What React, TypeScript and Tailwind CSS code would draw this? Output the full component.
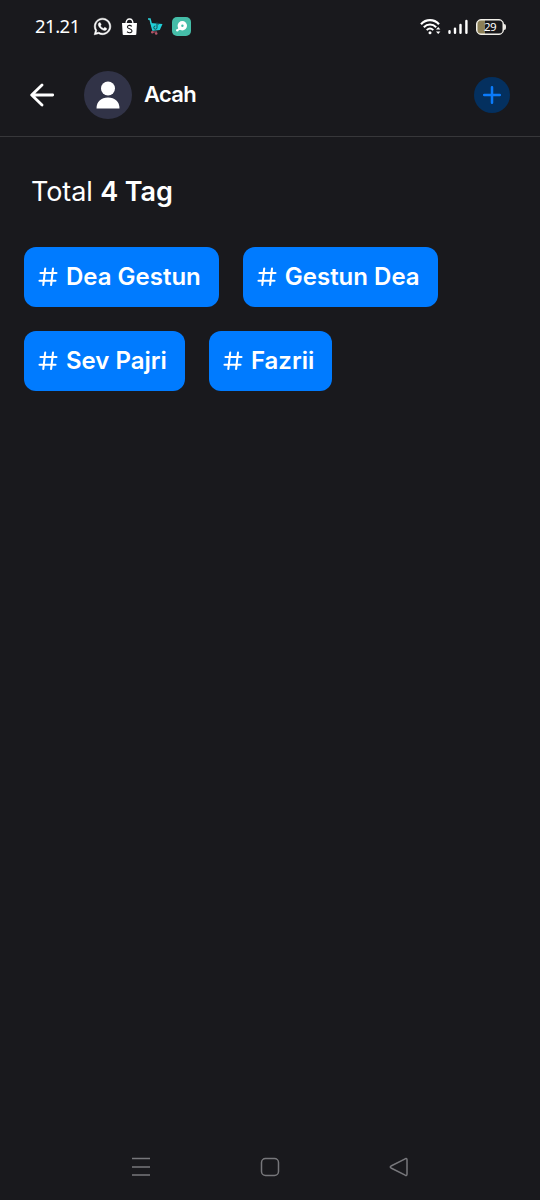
import { FaWhatsapp } from "react-icons/fa";

const tags = ["Dea Gestun", "Gestun Dea", "Sev Pajri", "Fazrii"];

const StatusBar = () => (
	<div className="flex h-[53px] items-center px-[34px] text-white">
		<p className="w-[59px] whitespace-nowrap pl-px font-['Noto_Sans',sans-serif] text-[18.5px] leading-none tracking-[-0.5px]">21.21</p>
		<FaWhatsapp className="mr-[9px] size-[19px] stroke-white stroke-[14px]" />
		<svg className="mr-[9px] h-[18px] w-[17px]" viewBox="0 0 17 18">
			<path d="M1 5h15l-.7 11.2Q15.200 17 14.400 17H2.600Q1.800 17 1.700 16.200Z" fill="#fff" />
			<path d="M5 6C5 2.500 6.500 1 8.500 1S12 2.500 12 6" fill="none" stroke="#fff" strokeWidth="1.300" />
			<path
				d="M10.800 8.300C9.500 7 6.500 7 6.400 9c0 2.100 4.700 1.600 4.600 4 0 2-3.100 2.200-5 .7"
				fill="none"
				stroke="#18181b"
				strokeWidth="1.100"
			/>
		</svg>
		<svg className="mr-[9px] h-[18px] w-[16px]" viewBox="0 0 16 18">
			<path d="M1 1h2l3 11.500" fill="none" stroke="#2cd3dc" strokeWidth="1.500" />
			<path d="M3.500 5 15.500 6 12.800 12l-6.800.8Z" fill="#20cfd8" />
			<path d="M10 4.500v5a1.600 1.600 0 1 1-1.600-1.500M10 4.500q.5 1.500 2 1.700" fill="none" stroke="#14464f" strokeWidth="1" />
			<path d="M4.500 14h5.500" stroke="#b4566a" strokeWidth="1" />
			<circle cx="5.300" cy="14.300" r="1.200" fill="#b4566a" />
			<circle cx="9.200" cy="15.500" r="1.300" fill="#b4566a" />
		</svg>
		<svg className="size-[19px]" viewBox="0 0 19 19">
			<rect width="19" height="19" rx="5" fill="#45bda8" />
			<circle cx="10.300" cy="8.800" r="4.700" fill="#fff" />
			<path d="m7 10-2.300 3.600L9 12.700Z" fill="#fff" />
			<circle cx="5.300" cy="13.300" r="1.200" fill="#fff" />
			<circle cx="10.400" cy="8.700" r="1.200" fill="#45bda8" />
		</svg>

		<svg className="ml-auto h-[18px] w-[21px]" viewBox="0 0 21 18" fill="none" stroke="#fff">
			<path d="M1 6.200C6 .8 14 .8 19 6.200" strokeWidth="2.200" />
			<path d="M3.800 9.200c3.600-3.600 8.800-3.600 12.400 0" strokeWidth="2.100" />
			<path d="M6.700 12.100c2-1.900 4.600-1.900 6.600 0" strokeWidth="2" />
			<circle cx="10" cy="14.700" r="1.500" fill="#fff" stroke="none" />
			<path d="m16 11.600 2.200-2.700 2.200 2.700ZM16 13.400l2.200 2.700 2.200-2.700Z" fill="#fff" stroke="none" />
		</svg>
		<svg className="ml-[7px] h-[18px] w-[20px]" viewBox="0 0 20 18" stroke="#fff" strokeWidth="2.400" strokeLinecap="round">
			<path d="M1.500 13.300v1.500M7 10.600v4.200M12.500 7v7.800M18.400 3v11.800" />
		</svg>
		<div className="ml-[8px] flex items-center">
			<div className="flex h-[16px] w-[28px] items-center justify-center rounded-[5px] border-[1.5px] border-[#f1efe9] bg-linear-to-r from-[#8c8057] from-30% to-[#18181b] to-30% font-['Noto_Sans',sans-serif] text-[11.5px] leading-none tracking-[-0.5px] shadow-[inset_0_0_0_0.5px_#f1efe9]">
				29
			</div>
			<div className="h-[6px] w-[2px] rounded-r-sm bg-[#e9e7e2]" />
		</div>
	</div>
);

const Header = () => (
	<div className="flex h-[84px] items-center border-b border-[#37373a] px-[30px]">
		<svg className="h-[24px] w-[25px]" viewBox="0 0 25 24" fill="none" stroke="#fff" strokeWidth="2.800" strokeLinecap="round" strokeLinejoin="round">
			<path d="M12 1.900 1.700 12 12 22.100M2 12h20.700" />
		</svg>
		<div className="ml-[29px] flex size-12 items-center justify-center rounded-full bg-[#313347]">
			<svg className="h-[28px] w-[24px]" viewBox="0 0 24 28" fill="#fff">
				<circle cx="12" cy="7.500" r="7" />
				<path d="M.5 27.500C.5 20.500 5 16.500 12 16.500S23.500 20.500 23.500 27.500Z" />
			</svg>
		</div>
		<p className="ml-3 pb-px text-[22px] font-semibold leading-none tracking-[-0.7px] text-white">Acah</p>
		<button className="ml-auto flex size-9 items-center justify-center rounded-full bg-[#04305f]">
			<svg className="size-[18px]" viewBox="0 0 18 18" stroke="#0b7bfb" strokeWidth="2.500" strokeLinecap="round">
				<path d="M9 1.200v15.600M1.200 9h15.600" />
			</svg>
		</button>
	</div>
);

const Tag = ({ name }: { name: string }) => (
	<div className="flex h-[60px] items-center rounded-xl bg-[#007bff] pl-[14px] pr-[18px] text-white">
		<svg className="mr-[8px] size-5" viewBox="0 0 20 20" fill="none" stroke="#fff" strokeWidth="2.100" strokeLinecap="round">
			<path d="M2.500 6h16M1.500 13.700h16M7.200 1.500 5.300 18M15 1.500 13.100 18" />
		</svg>
		<p className="whitespace-nowrap text-[24px] font-semibold leading-none">{name}</p>
	</div>
);

const NavBar = () => (
	<div className="mt-auto flex h-[66px] items-center justify-between px-[131px]">
		<svg className="size-5" viewBox="0 0 20 20" stroke="#77777b" strokeWidth="1.500">
			<path d="M1 1.500h18M1 10h18M1 18h18" />
		</svg>
		<svg className="size-5" viewBox="0 0 20 20" fill="none" stroke="#77777b" strokeWidth="1.500">
			<rect x="1.500" y="1.500" width="17" height="17" rx="4" />
		</svg>
		<svg className="size-5" viewBox="0 0 20 20" fill="none" stroke="#77777b" strokeWidth="1.500" strokeLinejoin="round">
			<path d="M2 9 16.200 1.800Q18 1 18 3v14q0 2-1.800 1.200L2 11Q.5 10 2 9Z" />
		</svg>
	</div>
);

const App = () => {
	return (
		<div className="flex h-[1200px] w-[540px] flex-col overflow-hidden bg-[#19191d] font-[Inter,sans-serif]">
			<StatusBar />
			<Header />
			<p className="ml-[31px] mt-[39px] text-[27px] font-normal leading-[32px] tracking-[-0.1px] text-white">
				Total <span className="font-semibold">4 Tag</span>
			</p>
			<div className="mt-[39px] flex flex-wrap gap-6 px-6">
				{tags.map((tag) => (
					<Tag key={tag} name={tag} />
				))}
			</div>
			<NavBar />
		</div>
	);
};

export default App;
